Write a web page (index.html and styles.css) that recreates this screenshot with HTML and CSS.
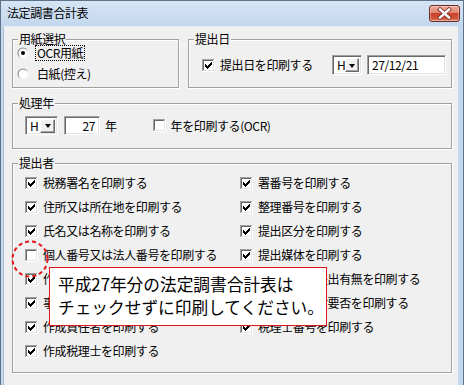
FILE: index.html
```html
<!DOCTYPE html>
<html lang="ja">
<head>
<meta charset="utf-8">
<link rel="stylesheet" href="styles.css">
</head>
<body>
<svg class="defs" width="0" height="0" aria-hidden="true">
  <defs>
    <symbol id="cb" viewBox="0 0 13 13">
      <rect width="13" height="13" fill="#fff"/>
      <path d="M0 0h12v1H1v11H0z" fill="#a0a0a0"/>
      <path d="M1 1h10v1H2v9H1z" fill="#696969"/>
      <path d="M12 0h1v13H0v-1h12z" fill="#fff"/>
      <path d="M11 1h1v11H1v-1h10z" fill="#e3e3e3"/>
    </symbol>
    <symbol id="ck" viewBox="0 0 13 13">
      <path d="M3 5h1v1h1v1h1v-1h1v-1h1v-1h1v-1h1v3h-1v1h-1v1h-1v1h-1v1h-1v-1h-1v-1h-1z" fill="#000"/>
    </symbol>
    <linearGradient id="rg" x1="0" y1="0" x2="1" y2="1">
      <stop offset="0.35" stop-color="#808080"/>
      <stop offset="0.65" stop-color="#f4f4f4"/>
    </linearGradient>
  </defs>
</svg>
<div class="window">
  <div class="titlebar">
    <span class="title">法定調書合計表</span>
    <div class="close">
      <svg width="29" height="15" viewBox="0 0 29 15"><path d="M10 3.5l9 8M19 3.5l-9 8" stroke="#7a2a22" stroke-width="4" stroke-linecap="square"/><path d="M10 3.5l9 8M19 3.5l-9 8" stroke="#fff" stroke-width="2.4" stroke-linecap="square"/></svg>
    </div>
  </div>
  <div class="frame">
    <div class="client">
      <div class="top-row">
        <div class="group g-paper">
          <div class="legend">用紙選択</div>
          <div class="paper-body">
            <div class="opt"><svg class="radio" width="12" height="12" viewBox="0 0 12 12"><circle cx="6" cy="6" r="5.5" fill="url(#rg)"/><circle cx="6" cy="6" r="4.5" fill="#fff"/><circle cx="6" cy="6" r="2" fill="#000"/></svg><span class="focus">OCR用紙</span></div>
            <div class="opt"><svg class="radio" width="12" height="12" viewBox="0 0 12 12"><circle cx="6" cy="6" r="5.5" fill="url(#rg)"/><circle cx="6" cy="6" r="4.5" fill="#fff"/></svg><span class="txt">白紙(控え)</span></div>
          </div>
        </div>
        <div class="group g-date">
          <div class="legend">提出日</div>
          <div class="date-body">
            <div class="chk"><svg width="13" height="13"><use href="#cb"/><use href="#ck"/></svg><span>提出日を印刷する</span></div>
            <div class="combo c-date"><span class="cv">H</span><span class="cbtn"><i class="tri"></i></span></div>
            <div class="edit e-date">27/12/21</div>
          </div>
        </div>
      </div>

      <div class="group g-year">
        <div class="legend">処理年</div>
        <div class="year-body">
          <div class="combo c-year"><span class="cv">H</span><span class="cbtn"><i class="tri"></i></span></div>
          <div class="edit e-year">27</div>
          <span class="nen">年</span>
          <div class="chk chk-year"><svg width="13" height="13"><use href="#cb"/></svg><span>年を印刷する(OCR)</span></div>
        </div>
      </div>

      <div class="group g-sub">
        <div class="legend">提出者</div>
        <div class="sub-body">
          <div class="chk"><svg width="13" height="13"><use href="#cb"/><use href="#ck"/></svg><span>税務署名を印刷する</span></div>
          <div class="chk"><svg width="13" height="13"><use href="#cb"/><use href="#ck"/></svg><span>署番号を印刷する</span></div>
          <div class="chk"><svg width="13" height="13"><use href="#cb"/><use href="#ck"/></svg><span>住所又は所在地を印刷する</span></div>
          <div class="chk"><svg width="13" height="13"><use href="#cb"/><use href="#ck"/></svg><span>整理番号を印刷する</span></div>
          <div class="chk"><svg width="13" height="13"><use href="#cb"/><use href="#ck"/></svg><span>氏名又は名称を印刷する</span></div>
          <div class="chk"><svg width="13" height="13"><use href="#cb"/><use href="#ck"/></svg><span>提出区分を印刷する</span></div>
          <div class="chk"><svg width="13" height="13"><use href="#cb"/></svg><span>個人番号又は法人番号を印刷する</span></div>
          <div class="chk"><svg width="13" height="13"><use href="#cb"/><use href="#ck"/></svg><span>提出媒体を印刷する</span></div>
          <div class="chk"><svg width="13" height="13"><use href="#cb"/><use href="#ck"/></svg><span>作成年月日を印刷する</span></div>
          <div class="chk"><svg width="13" height="13"><use href="#cb"/><use href="#ck"/></svg><span>電子媒体等提出有無を印刷する</span></div>
          <div class="chk"><svg width="13" height="13"><use href="#cb"/><use href="#ck"/></svg><span>事業者番号を印刷する</span></div>
          <div class="chk"><svg width="13" height="13"><use href="#cb"/><use href="#ck"/></svg><span>源泉明細添付要否を印刷する</span></div>
          <div class="chk"><svg width="13" height="13"><use href="#cb"/><use href="#ck"/></svg><span>作成責任者を印刷する</span></div>
          <div class="chk"><svg width="13" height="13"><use href="#cb"/><use href="#ck"/></svg><span>税理士番号を印刷する</span></div>
          <div class="chk"><svg width="13" height="13"><use href="#cb"/><use href="#ck"/></svg><span>作成税理士を印刷する</span></div>
        </div>
      </div>
    </div>
  </div>
</div>

<svg class="mark" width="40" height="40" viewBox="0 0 40 40"><circle cx="20" cy="20" r="17.5" fill="none" stroke="#e0161b" stroke-width="2" stroke-dasharray="4 3"/></svg>
<div class="tip">平成27年分の法定調書合計表は<br>チェックせずに印刷してください。</div>
</body>
</html>
```
FILE: styles.css
```css
html, body {
  margin: 0;
  padding: 0;
  width: 464px;
  height: 385px;
  overflow: hidden;
}
body {
  position: relative;
  font-family: "Noto Sans CJK JP", "Liberation Sans", sans-serif;
  font-size: 12px;
  letter-spacing: -0.4px;
  color: #000;
  background: #fff;
}
.defs { position: absolute; width: 0; height: 0; }

.window {
  width: 464px;
  height: 400px;
  box-sizing: border-box;
  border: 1px solid #5f728b;
  background: #c4d8ee;
  display: flex;
  flex-direction: column;
}
.titlebar {
  height: 25px;
  flex: none;
  display: flex;
  align-items: flex-start;
  background: linear-gradient(#d7e5f4, #c2d7ee);
}
.title {
  padding-left: 6px;
  line-height: 24px;
  font-size: 12px;
}
.close {
  margin-left: auto;
  margin-right: 3px;
  margin-top: 4px;
  width: 31px;
  height: 17px;
  box-sizing: border-box;
  border: 1px solid #6b2a22;
  border-radius: 3px;
  background: linear-gradient(#eeaa9a 0%, #de8670 45%, #c8412c 50%, #d2563c 85%, #e5977a 100%);
  box-shadow: inset 0 0 0 1px rgba(255,255,255,0.35);
  display: flex;
}
.close svg { display: block; }

.frame {
  flex: 1;
  display: flex;
  padding: 0 5px 0 2px;
}
.client {
  flex: 1;
  background: #f0f0f0;
  border-left: 1px solid #a9bcd1;
  border-top: 1px solid #e3ebf5;
  padding: 12px 6px 0 8px;
  display: flex;
  flex-direction: column;
}

.group {
  box-sizing: border-box;
  border: 1px solid #a0a0a0;
  box-shadow: inset 1px 1px 0 #fff, 1px 1px 0 #fff;
  display: flex;
  flex-direction: column;
}
.legend {
  align-self: flex-start;
  height: 14px;
  line-height: 14px;
  margin: -8px 0 -6px 5px;
  padding: 0 1px;
  background: #f0f0f0;
}

.top-row {
  display: flex;
  gap: 9px;
}
.g-paper { width: 167px; height: 49px; }
.g-date { flex: 1; height: 49px; }

.paper-body {
  padding: 5px 0 0 4px;
  display: flex;
  flex-direction: column;
  gap: 5px;
}
.opt {
  height: 16px;
  display: flex;
  align-items: center;
}
.radio { display: block; flex: none; }
.focus {
  margin-left: 6px;
  padding: 0 1px;
  border: 1px dotted #000;
  line-height: 14px;
}
.txt { margin-left: 8px; line-height: 16px; }

.date-body {
  padding: 15px 5px 0 13px;
  height: 20px;
  display: flex;
  align-items: center;
}
.chk {
  display: flex;
  align-items: center;
  gap: 5px;
  height: 16px;
  line-height: 16px;
  white-space: nowrap;
}
.chk svg { display: block; flex: none; }

.combo {
  box-sizing: border-box;
  height: 20px;
  display: flex;
  align-items: center;
  background: #fff;
  border: 1px solid;
  border-color: #a0a0a0 #fff #fff #a0a0a0;
  box-shadow: inset 1px 1px 0 #696969, inset -1px -1px 0 #e3e3e3;
  padding: 2px;
}
.cv { flex: 1; padding-left: 2px; line-height: 14px; }
.cbtn {
  box-sizing: border-box;
  width: 15px;
  height: 14px;
  background: #f0f0f0;
  border: 1px solid;
  border-color: #fff #696969 #696969 #fff;
  box-shadow: inset -1px -1px 0 #a0a0a0;
  display: flex;
  align-items: center;
  justify-content: center;
}
.tri {
  width: 0;
  height: 0;
  border-left: 3.5px solid transparent;
  border-right: 3.5px solid transparent;
  border-top: 4px solid #000;
  margin-top: 1px;
}
.edit {
  box-sizing: border-box;
  height: 20px;
  background: #fff;
  border: 1px solid;
  border-color: #a0a0a0 #fff #fff #a0a0a0;
  box-shadow: inset 1px 1px 0 #696969, inset -1px -1px 0 #e3e3e3;
  line-height: 16px;
  padding: 1px 4px;
}
.c-date { margin-left: auto; width: 30px; }
.e-date { margin-left: 5px; width: 79px; }

.g-year { margin-top: 15px; height: 46px; }
.year-body {
  padding: 12px 0 0 12px;
  height: 19px;
  display: flex;
  align-items: center;
}
.c-year { width: 33px; height: 19px; }
.e-year { width: 36px; height: 19px; margin-left: 6px; text-align: right; line-height: 15px; }
.nen { margin-left: 5px; }
.chk-year { margin-left: 36px; }

.g-sub { margin-top: 14px; height: 210px; }
.sub-body {
  padding: 11px 0 0 12px;
  display: grid;
  grid-template-columns: 215px 1fr;
  grid-auto-rows: 16px;
  row-gap: 8px;
}

.mark {
  position: absolute;
  left: 10px;
  top: 239px;
}
.tip {
  position: absolute;
  left: 49px;
  top: 267px;
  width: 278px;
  height: 59px;
  box-sizing: border-box;
  background: #fff;
  border: 1px solid #e0161b;
  padding: 5px 0 0 8px;
  font-size: 16.7px;
  letter-spacing: 0;
  line-height: 23px;
  white-space: nowrap;
}
```
